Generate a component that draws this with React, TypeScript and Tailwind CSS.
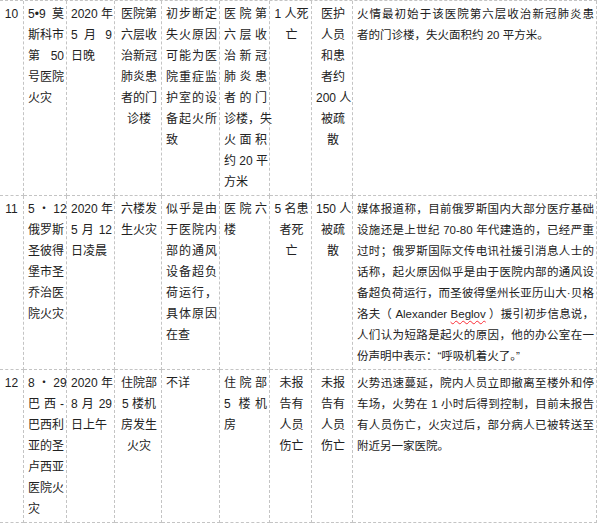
import React from "react";

type Align = "j" | "c" | "l";
type Cell = { lines: React.ReactNode[]; align: Align };

const j = (...lines: React.ReactNode[]): Cell => ({ lines, align: "j" });
const c = (...lines: React.ReactNode[]): Cell => ({ lines, align: "c" });
const l = (...lines: React.ReactNode[]): Cell => ({ lines, align: "l" });

const rows: Cell[][] = [
  [
    c("10"),
    j("5•9 莫", "斯科市", "第 50", "号医院", "火灾"),
    j("2020 年", "5 月 9", "日晚"),
    c("医院第", "六层收", "治新冠", "肺炎患", "者的门", "诊楼"),
    j("初步断定", "失火原因", "可能为医", "院重症监", "护室的设", "备起火所", "致"),
    j("医院第", "六层收", "治新冠", "肺炎患", "者的门", "诊楼，失", "火面积", "约 20 平", "方米"),
    c("1 人死", "亡"),
    c("医护", "人员", "和患", "者约", "200 人", "被疏", "散"),
    j("火情最初始于该医院第六层收治新冠肺炎患", "者的门诊楼，失火面积约 20 平方米。"),
  ],
  [
    c("11"),
    j("5 ・ 12", "俄罗斯", "圣彼得", "堡市圣", "乔治医", "院火灾"),
    j("2020 年", "5 月 12", "日凌晨"),
    c("六楼发", "生火灾"),
    j("似乎是由", "于医院内", "部的通风", "设备超负", "荷运行，", "具体原因", "在查"),
    j("医 院 六", "楼"),
    c("5 名患", "者死", "亡"),
    c("150 人", "被疏", "散"),
    j(
      "媒体报道称，目前俄罗斯国内大部分医疗基础",
      "设施还是上世纪 70-80 年代建造的，已经严重",
      "过时；俄罗斯国际文传电讯社援引消息人士的",
      "话称，起火原因似乎是由于医院内部的通风设",
      "备超负荷运行，而圣彼得堡州长亚历山大·贝格",
      <>
        洛夫（ Alexander{" "}
        <span className="underline decoration-wavy decoration-red-500 decoration-1 underline-offset-2">Beglov</span>
        {" "}）援引初步信息说，
      </>,
      "人们认为短路是起火的原因，他的办公室在一",
      "份声明中表示：“呼吸机着火了。”"
    ),
  ],
  [
    c("12"),
    j("8 ・ 29", "巴 西 -", "巴西利", "亚的圣", "卢西亚", "医院火", "灾"),
    j("2020 年", "8 月 29", "日上午"),
    c("住院部", "5 楼机", "房发生", "火灾"),
    l("不详"),
    j("住院部", "5 楼机", "房"),
    c("未报", "告有", "人员", "伤亡"),
    c("未报", "告有", "人员", "伤亡"),
    j(
      "火势迅速蔓延，院内人员立即撤离至楼外和停",
      "车场，火势在 1 小时后得到控制，目前未报告",
      "有人员伤亡，火灾过后，部分病人已被转送至",
      "附近另一家医院。"
    ),
  ],
];

const TableCell = ({ cell, col }: { cell: Cell; col: number }) => {
  const pad = col === 0 ? "px-0" : col === 8 ? "pl-[4px] pr-[2px] text-[11.5px]" : "pl-[4px] pr-[2px]";
  return (
    <div className={`border-r border-b border-dashed border-[#c4c4c4] pt-[3px] pb-[2px] ${pad}`}>
      {cell.lines.map((line, i) => {
        const last = i === cell.lines.length - 1;
        let cls = "whitespace-nowrap";
        if (cell.align === "c") cls += " text-center";
        else if (cell.align === "j" && !last) cls += " text-justify [text-align-last:justify]";
        else cls += " text-left";
        return (
          <div key={i} className={cls}>
            {line}
          </div>
        );
      })}
    </div>
  );
};

export default function App() {
  return (
    <div className="w-[600px] h-[526px] bg-white overflow-hidden">
      <div
        className="grid w-[597px] grid-cols-[24px_43px_48px_47px_58px_50px_42px_41px_244px] border-t border-dashed border-[#c4c4c4] text-[12px] leading-[21px] text-[#222]"
        style={{ fontFamily: '"Liberation Sans", "Noto Sans CJK SC", sans-serif' }}
      >
        {rows.map((row, r) =>
          row.map((cell, ci) => <TableCell key={`${r}-${ci}`} cell={cell} col={ci} />)
        )}
      </div>
    </div>
  );
}
